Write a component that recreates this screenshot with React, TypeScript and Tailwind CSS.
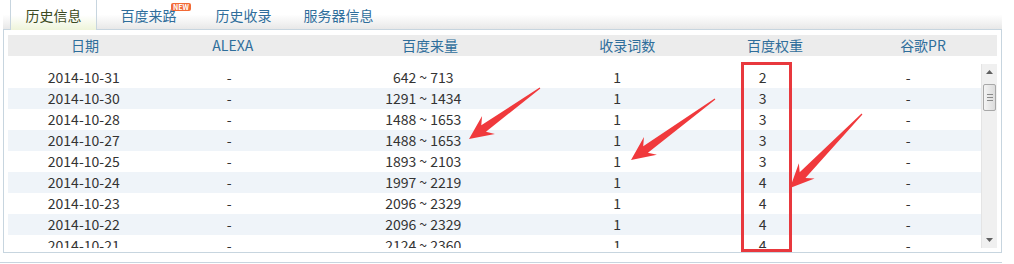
import React from 'react';

const rows = [
  ['2014-10-31', '-', '642 ~ 713', '1', '2', '-'],
  ['2014-10-30', '-', '1291 ~ 1434', '1', '3', '-'],
  ['2014-10-28', '-', '1488 ~ 1653', '1', '3', '-'],
  ['2014-10-27', '-', '1488 ~ 1653', '1', '3', '-'],
  ['2014-10-25', '-', '1893 ~ 2103', '1', '3', '-'],
  ['2014-10-24', '-', '1997 ~ 2219', '1', '4', '-'],
  ['2014-10-23', '-', '2096 ~ 2329', '1', '4', '-'],
  ['2014-10-22', '-', '2096 ~ 2329', '1', '4', '-'],
  ['2014-10-21', '-', '2124 ~ 2360', '1', '4', '-'],
  ['2014-10-20', '-', '2124 ~ 2360', '1', '4', '-'],
];

const headers = ['日期', 'ALEXA', '百度来量', '收录词数', '百度权重', '谷歌PR'];
const tabs = ['历史信息', '百度来路', '历史收录', '服务器信息'];

// red annotation arrow: thin tail widening into a head
function arrowPoints(tx: number, ty: number, px: number, py: number) {
  const dx = px - tx;
  const dy = py - ty;
  const len = Math.hypot(dx, dy);
  const ux = dx / len;
  const uy = dy / len;
  const nx = -uy;
  const ny = ux;
  const headLen = 24;
  const headW = 11;
  const neck = 4;
  const bx = px - ux * headLen;
  const by = py - uy * headLen;
  const cx = px - ux * (headLen - 6);
  const cy = py - uy * (headLen - 6);
  const pts = [
    [tx + nx * 0.6, ty + ny * 0.6],
    [cx + nx * neck, cy + ny * neck],
    [bx + nx * headW, by + ny * headW],
    [px, py],
    [bx - nx * headW, by - ny * headW],
    [cx - nx * neck, cy - ny * neck],
    [tx - nx * 0.6, ty - ny * 0.6],
  ];
  return pts.map((p) => p.join(',')).join(' ');
}

function Scrollbar() {
  return (
    <div className="w-[16px] h-full bg-[#f0f0f0] border-l border-[#e4e4e4] flex flex-col">
      <div className="h-[16px] flex items-center justify-center">
        <svg width="7" height="4" viewBox="0 0 7 4">
          <path d="M0 4 L3.5 0 L7 4 Z" fill="#606060" />
        </svg>
      </div>
      <div className="mx-[1px] mt-[4px] h-[27px] rounded-[2px] border border-[#a8a8a8] bg-gradient-to-r from-[#f4f4f4] to-[#dcdcdc] flex flex-col items-center justify-center gap-[2px]">
        <div className="w-[6px] h-px bg-[#8a8a8a]" />
        <div className="w-[6px] h-px bg-[#8a8a8a]" />
        <div className="w-[6px] h-px bg-[#8a8a8a]" />
      </div>
      <div className="flex-1" />
      <div className="h-[16px] flex items-center justify-center">
        <svg width="7" height="4" viewBox="0 0 7 4">
          <path d="M0 0 L3.5 4 L7 0 Z" fill="#606060" />
        </svg>
      </div>
    </div>
  );
}

export default function App() {
  return (
    <div
      className="relative w-[1014px] h-[264px] bg-white overflow-hidden text-[14px]"
      style={{ fontFamily: '"Noto Sans CJK SC", "Microsoft YaHei", sans-serif' }}
    >
      {/* tab bar */}
      <div className="ml-[3px] w-[999px] h-[30px] border-b border-[#c7d5df] bg-gradient-to-b from-white via-white via-[50%] to-[#e8e8e8] flex gap-[8px] pl-[7px]">
        {tabs.map((t, i) => (
          <div
            key={t}
            className={
              i === 0
                ? 'relative w-[87px] h-[30px] -mb-px border-x border-[#c7d5df] bg-gradient-to-b from-white via-white to-[#eef4da] flex justify-center pt-[5px] text-[#3c4a22]'
                : 'relative w-[87px] h-[30px] flex justify-center pt-[5px] text-[#2f6e9b]'
            }
          >
            <span className="leading-[20px]">{t}</span>
            {i === 1 && (
              <span className="absolute left-[66px] top-[3px] h-[8px] px-[2px] rounded-[2px] bg-[#f26a36] text-white text-[7px] leading-[8px] font-bold">
                NEW
              </span>
            )}
          </div>
        ))}
      </div>

      {/* panel */}
      <div className="ml-[3px] w-[999px] h-[223px] border-x border-b border-[#c7d5df] pt-[5px] px-[4px] pb-[3px] flex flex-col">
        <div className="h-[21px] bg-[#ececec] grid grid-cols-[15%_15%_25%_15%_15%_15%] pl-[3px] items-center text-[#2f6e9b] leading-[21px]">
          {headers.map((h) => (
            <div key={h} className="text-center">{h}</div>
          ))}
        </div>
        <div className="mt-[8px] h-[184px] flex">
          <div className="flex-1 overflow-hidden pt-[3px]">
            {rows.map((r, i) => (
              <div
                key={i}
                className={
                  (i % 2 === 1 ? 'bg-[#eff4f9] ' : 'bg-white ') +
                  'h-[21px] grid grid-cols-[15%_15%_25%_15%_15%_15%] pl-[3px] items-center text-[#333333] leading-[21px]'
                }
              >
                {r.map((c, j) => (
                  <div key={j} className="text-center">{c}</div>
                ))}
              </div>
            ))}
          </div>
          <Scrollbar />
        </div>
      </div>

      <div className="mt-[9px] w-[1002px] border-t border-[#c7d5df]" />

      {/* annotations */}
      <div className="absolute left-[741px] top-[62px] w-[51px] h-[190px] border-[3px] border-[#e8383d]" />
      <svg className="absolute left-0 top-0 pointer-events-none" width="1014" height="264">
        <polygon points={arrowPoints(540, 88, 469, 139)} fill="#f0393c" />
        <polygon points={arrowPoints(715, 99, 631, 160)} fill="#f0393c" />
        <polygon points={arrowPoints(862, 114, 790, 188)} fill="#f0393c" />
      </svg>
    </div>
  );
}
